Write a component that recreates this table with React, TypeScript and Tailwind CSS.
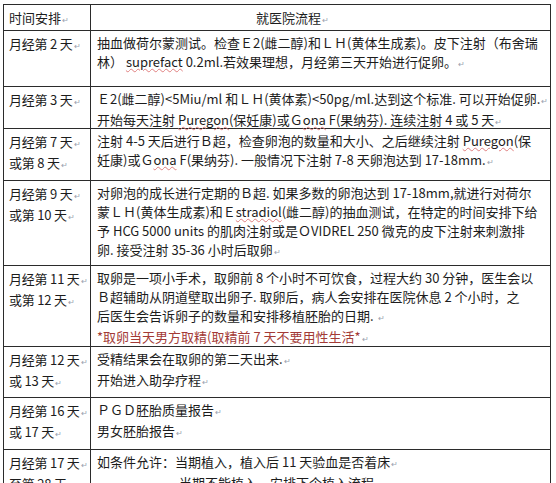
import React from 'react'

function Ret() {
	return <span className="ml-[1px] text-[8px] text-gray-400 align-middle">↵</span>
}

function Wavy({ children }: { children: React.ReactNode }) {
	return <span className="underline decoration-wavy decoration-[#e08080] decoration-1 underline-offset-1">{children}</span>
}

interface Row {
	h: string
	left: React.ReactNode[]
	right: React.ReactNode[]
}

const rows: Row[] = [
	{
		h: 'h-[56px]',
		left: [<>月经第 2 天<Ret /></>],
		right: [
			<>抽血做荷尔蒙测试。检查Ｅ2(雌二醇)和ＬＨ(黄体生成素)。皮下注射（布舍瑞</>,
			<>林） <Wavy>suprefact</Wavy> 0.2ml.若效果理想，月经第三天开始进行促卵。<Ret /></>,
		],
	},
	{
		h: 'h-[42px]',
		left: [<>月经第 3 天<Ret /></>],
		right: [
			<> Ｅ2(雌二醇)&lt;5Miu/ml 和ＬＨ(黄体素)&lt;50pg/ml.达到这个标准. 可以开始促卵.<Ret /></>,
			<>开始每天注射 <Wavy>Puregon</Wavy>(保妊康)或Ｇ<Wavy>ona</Wavy> F(果纳芬). 连续注射 4 或 5 天<Ret /></>,
		],
	},
	{
		h: 'h-[52px]',
		left: [<>月经第 7 天<Ret /></>, <>或第 8 天<Ret /></>],
		right: [
			<>注射 4-5 天后进行Ｂ超，检查卵泡的数量和大小、之后继续注射 <Wavy>Puregon</Wavy>(保</>,
			<>妊康)或Ｇ<Wavy>ona</Wavy> F(果纳芬). 一般情况下注射 7-8 天卵泡达到 17-18mm.<Ret /></>,
		],
	},
	{
		h: 'h-[85px]',
		left: [<>月经第 9 天<Ret /></>, <>或第 10 天<Ret /></>],
		right: [
			<>对卵泡的成长进行定期的Ｂ超. 如果多数的卵泡达到 17-18mm,就进行对荷尔</>,
			<>蒙ＬＨ(黄体生成素)和Ｅ<Wavy>stradiol</Wavy>(雌二醇)的抽血测试，在特定的时间安排下给</>,
			<>予 HCG 5000 units 的肌肉注射或是ＯVIDREL 250 微克的皮下注射来刺激排</>,
			<>卵. 接受注射 35-36 小时后取卵<Ret /></>,
		],
	},
	{
		h: 'h-[81px]',
		left: [<>月经第 11 天<Ret /></>, <>或第 12 天<Ret /></>],
		right: [
			<>取卵是一项小手术，取卵前 8 个小时不可饮食，过程大约 30 分钟，医生会以</>,
			<> Ｂ超辅助从阴道壁取出卵子. 取卵后，病人会安排在医院休息 2 个小时，之</>,
			<>后医生会告诉卵子的数量和安排移植胚胎的日期. <Ret /></>,
			<span className="text-[#a33a36]">*取卵当天男方取精(取精前 7 天不要用性生活*<Ret /></span>,
		],
	},
	{
		h: 'h-[51px]',
		left: [<>月经第 12 天<Ret /></>, <>或 13 天<Ret /></>],
		right: [<>受精结果会在取卵的第二天出来.<Ret /></>, <>开始进入助孕疗程<Ret /></>],
	},
	{
		h: 'h-[52px]',
		left: [<>月经第 16 天<Ret /></>, <>或 17 天<Ret /></>],
		right: [<>ＰＧＤ胚胎质量报告<Ret /></>, <>男女胚胎报告<Ret /></>],
	},
	{
		h: 'h-[60px]',
		left: [<>月经第 17 天<Ret /></>, <>至第 28 天<Ret /></>],
		right: [
			<>如条件允许：当期植入，植入后 11 天验血是否着床<Ret /></>,
			<span className="pl-[82px]">当期不能植入，安排下个植入流程。<Ret /></span>,
		],
	},
]

export default function App() {
	return (
		<div className="w-[556px] h-[483px] overflow-hidden bg-white pt-[4px] pl-[3px] font-['Noto_Sans_CJK_SC','Noto_Sans',sans-serif] text-[13px] leading-[19px] text-[#1c1c1c]">
			<div className="w-[548px] border border-b-0 border-[#2b2b2b]">
				<div className="flex h-[26px] border-b border-[#2b2b2b]">
					<div className="w-[87px] shrink-0 border-r border-[#2b2b2b] pl-[5px] pt-[3px]">
						时间安排<Ret />
					</div>
					<div className="flex-1 pl-[165px] pt-[3px]">
						就医院流程<Ret />
					</div>
				</div>
				{rows.map((r, i) => (
					<div key={i} className={`flex border-b border-[#2b2b2b] ${r.h}`}>
						<div className="w-[87px] shrink-0 border-r border-[#2b2b2b] pl-[5px] pt-[3px] tracking-[-0.2px]">
							{r.left.map((l, j) => (
								<div key={j} className="whitespace-nowrap">{l}</div>
							))}
						</div>
						<div className="flex-1 pl-[6px] pt-[2px]">
							{r.right.map((l, j) => (
								<div key={j} className="whitespace-nowrap">{l}</div>
							))}
						</div>
					</div>
				))}
			</div>
		</div>
	)
}
